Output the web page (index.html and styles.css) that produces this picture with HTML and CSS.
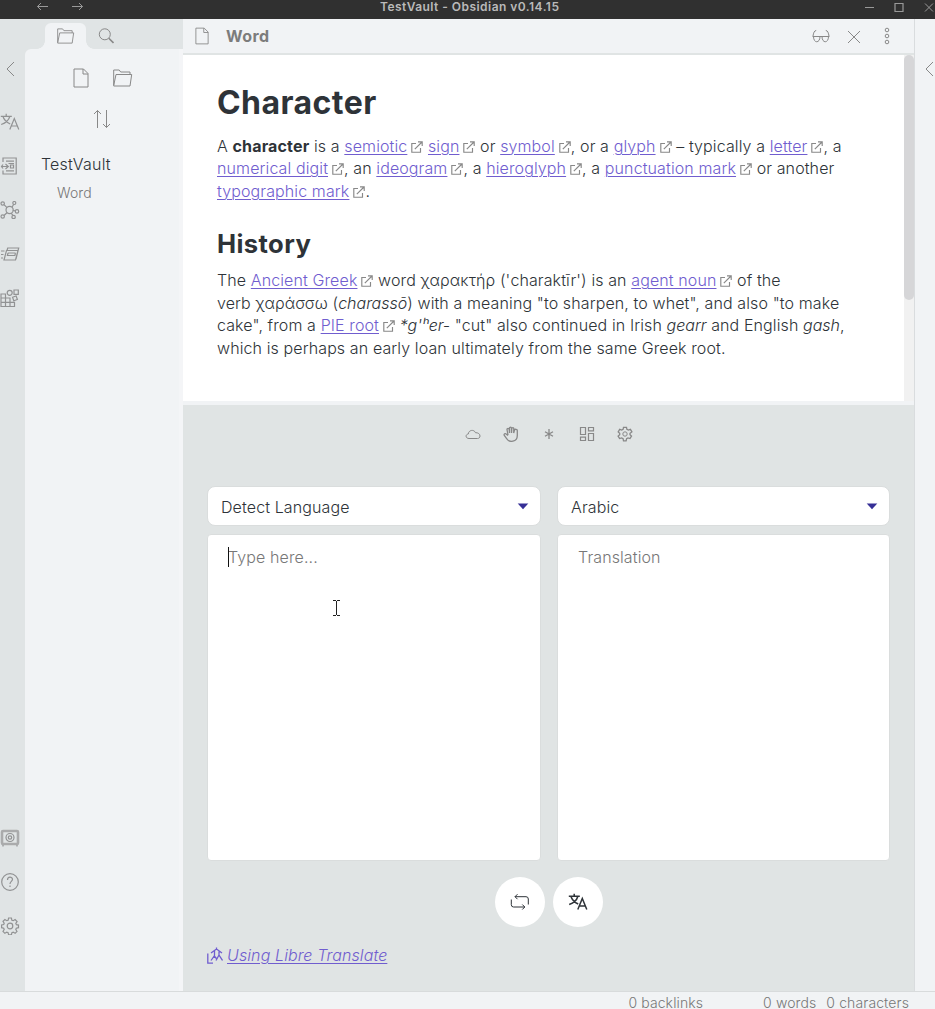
FILE: index.html
```
<!DOCTYPE html>
<html lang="en">
<head>
<meta charset="utf-8">
<title>TestVault - Obsidian v0.14.15</title>
<link rel="stylesheet" href="styles.css">
</head>
<body>
<svg class="defs" width="0" height="0">
  <symbol id="ext" viewBox="0 0 12 12"><path d="M5 2.500H.8v8.700h8.700V7M3.800 8.200 11 1M7 .8h4.200V5"/></symbol>
  <symbol id="doc" viewBox="0 0 16 20"><path d="M1 1h9.500L15 5.500V19H1zM10 1v5h5"/></symbol>
  <symbol id="folder" viewBox="0 0 20 18"><path d="M1.200 16.500V1h5.500l1.500 2h9.300v2.500M1.200 16.500 3.500 5.500h15.700L17.500 17H1.200z"/></symbol>
  <symbol id="lang" viewBox="0 0 20 18"><path d="M.8 3.300h11M6.200.8v2.500M3 3.500c1 3.500 3.500 5.800 7.200 7.500M9.800 3.500C8.800 7 5.500 10 1.200 11.500M9.800 16.500l4.500-11 4.500 11M11.200 13h6.200"/></symbol>
  <symbol id="gear" viewBox="0 0 18 18"><circle cx="9" cy="9" r="2.800"/><path d="M7.600 1h2.800l.5 2.200 1.300.5 1.900-1.200 2 2-1.300 1.900.6 1.300 2.100.4v2.600l-2.200.5-.5 1.300 1.200 1.900-1.900 1.900-1.900-1.200-1.300.6-.5 2.100H7.600l-.5-2.200-1.300-.5-1.900 1.200-1.900-1.900 1.200-1.900-.5-1.300L.6 10.700V8l2.100-.5.5-1.300L2 4.400l1.900-1.900 1.900 1.200 1.300-.5z"/></symbol>
</svg>

<header class="titlebar">
  <svg class="nav" width="12" height="10" viewBox="0 0 12 10"><path d="M11 4.500H.5M4 1 .5 4.500 4 8"/></svg>
  <svg class="nav" width="12" height="10" viewBox="0 0 12 10"><path d="M0 4.500h10.500M7 1l3.500 3.500L7 8"/></svg>
  <span class="caption">TestVault - Obsidian v0.14.15</span>
  <svg class="controls" width="70" height="14" viewBox="0 0 70 14"><path d="M0 5.500h9"/><path d="M30 1.500h8v8h-8z" stroke-width="1.200"/><path d="m60 1.500 8 8m0-8-8 8"/></svg>
</header>

<div class="workspace">
  <nav class="ribbon">
    <svg class="collapse" width="9" height="16" viewBox="0 0 9 16"><path d="M8 1 1 8l7 7"/></svg>
    <div class="actions">
      <svg width="20" height="18"><use href="#lang"/></svg>
      <svg width="20" height="18" viewBox="0 0 20 18"><path d="M3 5V1h13.200v16H3v-3.500M6 4.200h8M8.500 6.500H14M6 13.800h8M1.500 9.500H8M5.500 7l2.800 2.500L5.500 12M3 7.500 1.500 9.500 3 11.500"/><path d="M10.500 8h3v3h-3z"/></svg>
      <svg width="20" height="18" viewBox="0 0 20 18"><path d="m4 3.700 3 3M13.700 3.200 12 6.300M4 14.500l3.200-3M12.800 9.500l2.600.4M11 12.200l1.800 2"/><circle cx="9.600" cy="9" r="3.600"/><circle cx="2.700" cy="2.500" r="1.700"/><circle cx="14.300" cy="2" r="1.500"/><circle cx="2.700" cy="15.500" r="1.700"/><circle cx="17" cy="10.400" r="1.700"/><circle cx="13.600" cy="16" r="1.700"/></svg>
      <svg width="20" height="18" viewBox="0 0 20 18"><path d="M6.500 5.500H18L15.500 15H4zM7 5.500 7.700 3h11L16 14M8 8h7.500M8 8l-.6 2.500h7.500L15.500 8M1 6h3.500M1 9.500h2.500M1 13h2"/></svg>
      <svg width="20" height="18" viewBox="0 0 20 18"><path d="M1 5h4.500v12.500H1zM1 9h9v8.500M1 13.300h13.500v4.200H1M10 13.300v4.200M14 1h4.300v4.300H14zM12.500 8.200l3.600-1.300 1.300 3.600-3.600 1.300z"/><circle cx="9.700" cy="3.800" r="2.500"/></svg>
    </div>
    <div class="actions bottom">
      <svg width="20" height="18" viewBox="0 0 20 18"><rect class="soft" x="2" y="2" width="16" height="13" rx="1"/><circle cx="10" cy="8.500" r="4"/><circle cx="10" cy="8.500" r="1.700"/><path d="M3 16v1.500M17 16v1.500"/></svg>
      <svg width="20" height="18" viewBox="0 0 20 18"><circle cx="10" cy="9" r="8.300"/><path d="M7.500 7c0-4 5-3.500 5-.7C12.500 8.300 10 8.500 10 11M10 12.500V14"/></svg>
      <svg width="20" height="18"><use href="#gear"/></svg>
    </div>
  </nav>

  <aside class="sidebar">
    <div class="tabs">
      <div class="tab"><svg width="19" height="16"><use href="#folder"/></svg></div>
      <svg width="16" height="16" viewBox="0 0 16 16"><circle cx="6.800" cy="6.300" r="5.500"/><path d="m10.800 10.300 4.700 4.700" stroke-width="1.600"/></svg>
    </div>
    <div class="files">
      <div class="tools">
        <svg width="16" height="20"><use href="#doc"/></svg>
        <svg width="21" height="18"><use href="#folder"/></svg>
      </div>
      <svg class="sort" width="18" height="20" viewBox="0 0 18 20"><path d="M4.500 19V1.500M1 5l3.500-3.500L8 5M13.500 1v17.500M10 15l3.500 3.500L17 15"/></svg>
      <div class="vault">TestVault</div>
      <div class="file">Word</div>
    </div>
  </aside>

  <main class="main">
    <div class="viewheader">
      <svg width="14" height="18"><use href="#doc"/></svg>
      <span class="viewtitle">Word</span>
      <svg width="18" height="14" viewBox="0 0 18 14"><path d="M.5 7.500h17M1 7c.5-3 1.300-5.500 3.200-5.500M17 7c-.5-3-1.300-5.500-3.200-5.500M1.500 7.500c0 7 6.500 7 6.500 0M10 7.500c0 7 6.500 7 6.500 0"/></svg>
      <svg class="close" width="14" height="14" viewBox="0 0 14 14"><path d="m1 1 12 12M13 1 1 13"/></svg>
      <svg width="6" height="18" viewBox="0 0 6 18"><circle cx="3" cy="3" r="1.800"/><circle cx="3" cy="9" r="1.800"/><circle cx="3" cy="15" r="1.800"/></svg>
    </div>
    <div class="reader">
      <article class="note">
        <h1>Character</h1>
        <p>A <b>character</b> is a <a>semiotic</a><svg><use href="#ext"/></svg> <a>sign</a><svg><use href="#ext"/></svg> or <a>symbol</a><svg><use href="#ext"/></svg>, or a <a>glyph</a><svg><use href="#ext"/></svg> – typically a <a>letter</a><svg><use href="#ext"/></svg>, a<br><a>numerical digit</a><svg><use href="#ext"/></svg>, an <a>ideogram</a><svg><use href="#ext"/></svg>, a <a>hieroglyph</a><svg><use href="#ext"/></svg>, a <a>punctuation mark</a><svg><use href="#ext"/></svg> or another<br><a>typographic mark</a><svg><use href="#ext"/></svg>.</p>
        <h2>History</h2>
        <p>The <a>Ancient Greek</a><svg><use href="#ext"/></svg> word χαρακτήρ ('charaktīr') is an <a>agent noun</a><svg><use href="#ext"/></svg> of the<br>verb χαράσσω (<i>charassō</i>) with a meaning "to sharpen, to whet", and also "to make<br>cake", from a <a>PIE root</a><svg><use href="#ext"/></svg> <i>*g'ʰer-</i> "cut" also continued in Irish <i>gearr</i> and English <i>gash</i>,<br>which is perhaps an early loan ultimately from the same Greek root.</p>
      </article>
      <div class="track"><div class="thumb"></div></div>
    </div>
    <section class="translator">
      <div class="modes">
        <svg width="16" height="16" viewBox="0 0 16 16"><path d="M4 12.500C.5 12.500 0 8.500 3.300 8 3.500 4 9 3 10.500 6.700 13 6.500 15 8 15 10c0 1.500-1 2.500-2.500 2.500z"/></svg>
        <svg width="16" height="16" viewBox="0 0 16 16"><path d="M5 9 4 3.500C4 2 6 2 6.200 3.500L6.500 7V2.200c0-1.500 2-1.500 2 0V7l.3-4.500c.2-1.300 2-1.300 2 0L10.700 7l.8-3c.5-1.200 2.800-.8 2.800.5v5C14.300 16.500 6 16.500 4 13L1.300 9.500C.5 8 2.300 7 3.200 8L5 9.500" stroke-width="1.300"/></svg>
        <svg width="16" height="16" viewBox="0 0 16 16"><path d="M8 3v10M4 5.700l8 4.600M12 5.700l-8 4.600" stroke-width="1.300"/></svg>
        <svg width="16" height="16" viewBox="0 0 16 16"><path d="M1.500 1.500h5v7h-5zM9.500 1.500h5v3.300h-5zM1.500 11.200h5v3.300h-5zM9.500 7.500h5v7h-5z" stroke-width="1.200"/></svg>
        <svg width="16" height="16" viewBox="0 0 16 16"><circle cx="8" cy="8" r="2.200"/><path d="M6.500 1.300h3l.4 2 1.500.8 2-.7 1.500 2.500L13 7.300v1.500l1.500 1.300-1.500 2.500-2-.6-1.400.8-.5 2H6.500l-.4-2-1.500-.8-2 .6-1.500-2.500L2.700 8.700V7.300L1.200 5.900l1.500-2.500 2 .7 1.400-.8z" stroke-width="1.300"/></svg>
      </div>
      <div class="columns">
        <div class="select"><span>Detect Language</span><svg width="12" height="7" viewBox="0 0 12 7"><path d="M.7.500h10.600L6 6.300z"/></svg></div>
        <div class="select"><span>Arabic</span><svg width="12" height="7" viewBox="0 0 12 7"><path d="M.7.500h10.600L6 6.300z"/></svg></div>
        <div class="area"><span class="caret"></span>Type here...
          <svg class="pointer" width="8" height="16" viewBox="0 0 8 16"><path d="M0 .5h3M4 .5h3M3.500 1v14M0 15.500h3M4 15.500h3"/></svg>
        </div>
        <div class="area">Translation</div>
      </div>
      <div class="buttons">
        <div class="round"><svg width="20" height="18" viewBox="0 0 20 18"><path d="M1.300 6.500v5.200q0 2.300 2.300 2.300h11.200M12.300 11.500l2.500 2.500-2.500 2.500M18.300 11.500V6q0-2.300-2.300-2.300H5M7.500 1.200 5 3.700l2.500 2.500"/></svg></div>
        <div class="round"><svg class="strong" width="20" height="18"><use href="#lang"/></svg></div>
      </div>
      <div class="service"><svg width="16" height="17" viewBox="0 0 16 17"><path d="M.8 6.500v9.700H6M9.500 .5v2M4 6l5.500-4 5.500 4M7.500 4v4.500l-3.500 5M7.300 9l2.500 3M12 4.500V8l3.500 5.500M12 8l-3 5.500"/></svg><a>Using Libre Translate</a></div>
    </section>
  </main>

  <aside class="rightribbon"><svg width="9" height="16" viewBox="0 0 9 16"><path d="M8 1 1 8l7 7"/></svg></aside>
</div>

<footer class="status"><span class="backlinks">0 backlinks</span><span>0 words</span><span>0 characters</span></footer>
</body>
</html>
```
FILE: styles.css
```
* { box-sizing: border-box; }
body {
  margin: 0; width: 935px; height: 1009px; overflow: hidden;
  display: flex; flex-direction: column;
  background: #f1f3f5; color: #2e3338;
  font: 300 16px/22.5px Inter, "Noto Sans", sans-serif;
  letter-spacing: .11px;
}
svg { fill: none; stroke: #888; stroke-width: 1; flex: none; }
.defs { position: absolute; }
a { color: #705dcf; text-decoration: underline; text-decoration-thickness: 1px; text-underline-offset: 2px; }
b { font-weight: 700; letter-spacing: .16px; }
i { letter-spacing: -.02px; }

.titlebar { height: 19px; flex: none; background: #303030; display: flex; padding: 2px 0 0 37px; gap: 23px; }
.titlebar svg { stroke: #999; }
.caption { flex: 1; margin-left: 273px; margin-top: -4px; font-size: 12px; line-height: 18px; font-weight: 600; color: #bababa; letter-spacing: .46px; white-space: nowrap; }

.workspace { height: 972px; flex: none; display: flex; }
.ribbon { width: 25px; flex: none; background: #e0e4e5; display: flex; flex-direction: column; padding-top: 42px; }
.collapse { margin-left: 6px; }
.actions { display: flex; flex-direction: column; gap: 26px; margin-top: 36px; }
.actions.bottom { margin-top: auto; margin-bottom: 56px; }
.ribbon .actions svg { stroke-width: 1.200; stroke: #919293; }
.soft { stroke: #aaabac; stroke-width: 2.600; }

.sidebar { width: 158px; flex: none; background: #e0e4e5; }
.tabs { height: 30px; padding: 4px 0 0 20px; display: flex; gap: 12px; align-items: center; }
.tab { width: 41px; height: 26px; background: #f1f3f5; border-radius: 6px 6px 0 0; display: flex; align-items: center; justify-content: center; position: relative; }
.tab::before, .tab::after { content: ""; position: absolute; bottom: 0; width: 8px; height: 8px; }
.tab::before { left: -8px; background: radial-gradient(circle at 0 0, transparent 7.500px, #f1f3f5 8px); }
.tab::after { right: -8px; background: radial-gradient(circle at 100% 0, transparent 7.500px, #f1f3f5 8px); }
.files { height: 942px; background: #f1f3f5; border-right: 4px solid #f4f5f7; border-radius: 6px 0 0 0; padding-top: 19px; display: flex; flex-direction: column; }
.tools { display: flex; gap: 23px; padding-left: 48px; align-items: center; }
.sort { margin: 21px 0 0 68px; }
.vault { margin: 24px 0 0 16px; letter-spacing: .2px; }
.file { margin: 6px 0 0 32px; font-size: 14px; color: #777; }

.main { width: 731px; flex: none; display: flex; flex-direction: column; }
.viewheader { height: 36px; flex: none; border-bottom: 2px solid #e0e4e4; display: flex; align-items: center; padding: 0 24px 0 12px; }
.viewtitle { flex: 1; margin-left: 17px; font-weight: 700; letter-spacing: .4px; color: #7c7c7c; }
.close { margin: 2px 23px 0 17px; }
.reader { height: 350px; flex: none; display: flex; background: #fff; border-bottom: 4px solid #f1f3f5; }
.note { width: 721px; padding: 26px 0 0 34px; white-space: nowrap; }
.note svg { width: 12px; height: 12px; margin: 0 0 -1px 4px; overflow: visible; stroke-width: 1.150; }
h1 { margin: 0; font-size: 32px; line-height: 44px; font-weight: 700; letter-spacing: .45px; }
h2 { margin: 24px 0 0; font-size: 25.600px; line-height: 36px; font-weight: 700; letter-spacing: .4px; }
p { margin: 9.700px 0 0; }
h2 + p { margin-top: 7px; }
.track { width: 10px; background: #f1f1f1; }
.thumb { height: 245px; border-radius: 5px; background: #d6d6d8; }

.translator { height: 586px; background: #e0e4e4; padding: 21px 25px 0 24px; }
.modes { display: flex; justify-content: center; gap: 22px; padding-left: 2px; }
.columns { display: grid; grid-template-columns: 334px 333px; grid-template-rows: 40px 327px; gap: 8px 16px; margin-top: 44px; }
.select, .area { background: #fff; border: 1px solid #dadddd; }
.select { border-radius: 8px; display: flex; align-items: center; justify-content: space-between; padding: 2px 11px 0 13px; }
.select svg { fill: #362f96; stroke: none; margin-top: -2px; }
.area { border-radius: 4px; padding: 11px 20px; color: #777; position: relative; }
.caret { position: absolute; left: 20px; top: 12px; width: 1px; height: 20px; background: #111; }
.pointer { position: absolute; left: 125px; top: 65px; stroke: #222; }
.buttons { display: flex; justify-content: center; gap: 8px; margin-top: 16px; padding-left: 2px; }
.round { width: 50px; height: 50px; border-radius: 50%; background: #fff; display: flex; align-items: center; justify-content: center; }
.round svg { stroke: #2e3338; }
.round .strong { stroke-width: 1.500; }
.service { display: flex; align-items: center; gap: 4px; margin-top: 17px; font-style: italic; }
.service svg { stroke: #705dcf; stroke-width: 1.300; }

.rightribbon { width: 21px; flex: none; border-left: 1px solid #d9dcde; padding: 42px 0 0 10px; }
.rightribbon svg { display: block; }
.status { height: 18px; flex: none; border-top: 1px solid #d8dbdc; display: flex; gap: 10px; padding-right: 26px; justify-content: flex-end; font-size: 14px; line-height: 22px; color: #777; white-space: nowrap; }
.backlinks { margin-right: 50px; }
```
